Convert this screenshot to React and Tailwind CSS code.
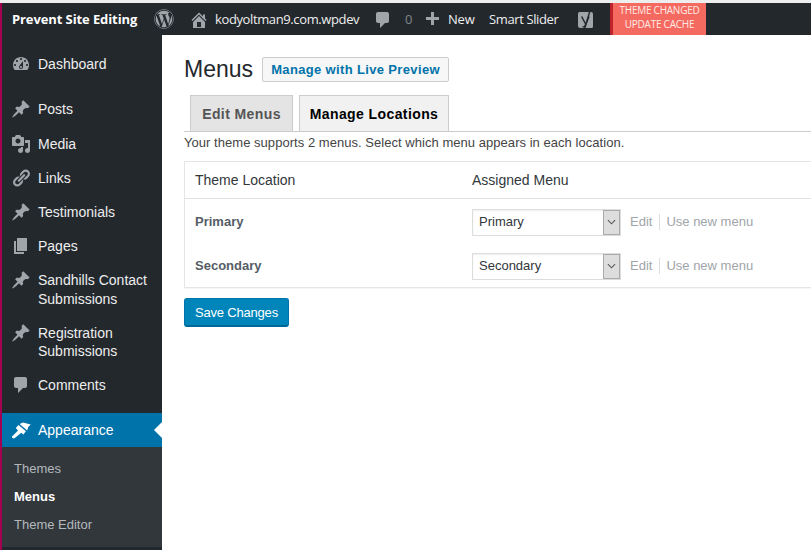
import React from "react";
import { FaWordpress } from "react-icons/fa";

const P = {
  dash: "M3.76 16h12.48c1.1-1.37 1.76-3.11 1.76-5 0-4.42-3.58-8-8-8s-8 3.58-8 8c0 1.89.66 3.63 1.76 5zM10 4c.55 0 1 .45 1 1s-.45 1-1 1-1-.45-1-1 .45-1 1-1zM6 6c.55 0 1 .45 1 1s-.45 1-1 1-1-.45-1-1 .45-1 1-1zm8 0c.55 0 1 .45 1 1s-.45 1-1 1-1-.45-1-1 .45-1 1-1zm-5.37 5.55L12 7v6c0 1.1-.9 2-2 2s-2-.9-2-2c0-.57.24-1.08.63-1.45zM4 10c.55 0 1 .45 1 1s-.45 1-1 1-1-.45-1-1 .45-1 1-1zm12 0c.55 0 1 .45 1 1s-.45 1-1 1-1-.45-1-1 .45-1 1-1zm-5 3c0-.55-.45-1-1-1s-1 .45-1 1 .45 1 1 1 1-.45 1-1z",
  pin: "M10.44 3.02l1.82-1.82 6.36 6.35-1.83 1.82c-1.05-.68-2.48-.57-3.41.36l-.75.75c-.92.93-1.04 2.35-.35 3.41l-1.83 1.82-2.41-2.41-2.8 2.79c-.42.42-3.38 2.71-3.8 2.29s1.86-3.39 2.28-3.81l2.79-2.79L4.1 9.36l1.83-1.82c1.05.69 2.48.57 3.41-.36l.75-.75c.93-.92 1.04-2.35.36-3.41z",
  media: "M13 11V4c0-.55-.45-1-1-1h-1.67L9 1H5L3.67 3H2c-.55 0-1 .45-1 1v7c0 .55.45 1 1 1h10c.55 0 1-.45 1-1zM7 4.5c1.38 0 2.5 1.12 2.5 2.5S8.38 9.5 7 9.5 4.5 8.38 4.5 7 5.62 4.5 7 4.5zM14 6h5v10.5c0 1.38-1.12 2.5-2.5 2.5S14 17.88 14 16.5s1.12-2.5 2.5-2.5c.17 0 .34.02.5.05V9h-3V6zm-4 8.05V13h2v3.5c0 1.38-1.12 2.5-2.5 2.5S7 17.88 7 16.5 8.12 14 9.5 14c.17 0 .34.02.5.05z",
  links: "M17.74 2.76c1.68 1.69 1.68 4.41 0 6.1l-1.53 1.52c-1.12 1.12-2.7 1.47-4.14 1.09l2.62-2.61.76-.77.76-.76c.84-.84.84-2.2 0-3.04-.84-.85-2.2-.85-3.04 0l-.77.76-3.38 3.38c-.37-1.44-.02-3.02 1.1-4.14l1.52-1.53c1.69-1.68 4.42-1.68 6.1 0zM8.59 13.43l5.34-5.34c.42-.42.42-1.1 0-1.52-.44-.43-1.13-.39-1.53 0l-5.33 5.34c-.42.42-.42 1.1 0 1.52.44.43 1.13.39 1.52 0zm-.76 2.29l4.14-4.15c.38 1.44.03 3.02-1.09 4.14l-1.52 1.53c-1.69 1.68-4.41 1.68-6.1 0-1.68-1.68-1.68-4.42 0-6.1l1.53-1.52c1.12-1.12 2.7-1.47 4.14-1.1l-4.14 4.15c-.85.84-.85 2.2 0 3.05.84.84 2.2.84 3.04 0z",
  page: "M6 15V2h10v13H6zm-1 1h8v2H3V5h2v11z",
  comment: "M5 2h9c1.1 0 2 .9 2 2v7c0 1.1-.9 2-2 2h-2l-5 5v-5H5c-1.1 0-2-.9-2-2V4c0-1.1.9-2 2-2z",
  home: "M16 8.5l1.53 1.53-1.06 1.06L10 4.62l-6.47 6.47-1.06-1.06L10 2.5l4 4v-2h2v4zm-6-2.46l6 5.99V18H4v-5.97zM12 17v-5H8v5h4z",
  plus: "M17 7v3h-5v5H9v-5H4V7h5V2h3v5h5z",
};

function Icon({ d, className }) {
  return (
    <svg viewBox="0 0 20 20" className={className} fill="currentColor" aria-hidden="true">
      <path d={d} fillRule="evenodd" />
    </svg>
  );
}

function Brush() {
  return (
    <svg viewBox="0 0 20 20" className="w-5 h-5 text-white" fill="currentColor" aria-hidden="true">
      <path d="M8.6 3.9 12 2.6 19.7 4.4 17.2 7 16.2 10.4Z" />
      <path d="M7.5 5 14.9 11.2 12.4 14.4 10.3 12.7 3.8 18C2.6 18.9.4 17.8 1 16.4L7 10.5 4.8 8Z" />
    </svg>
  );
}

function Yoast() {
  return (
    <svg viewBox="0 0 20 24" className="ml-[15px] mt-[1px] w-[20px] h-[24px]" aria-hidden="true">
      <path d="M3.5 4H15a2 2 0 0 1 2 2v12.5a1.5 1.5 0 0 1-1.5 1.5H4.5A2.5 2.5 0 0 1 2 17.5v-12A1.5 1.5 0 0 1 3.5 4Z" fill="#a0a5aa" />
      <path d="M14.5 1 8.4 21.5" stroke="#23282d" strokeWidth="1.4" fill="none" />
      <path d="M5.6 8.5 9.6 16M13 8.5l-3.4 8.2c-.7 1.6-1.6 2.3-3 2.3" stroke="#23282d" strokeWidth="1.5" fill="none" />
    </svg>
  );
}

function NavItem({ icon, lines, className = "", leading = "leading-[18.5px]" }) {
  return (
    <div className={`flex items-start pl-[9px] text-[#eeeeee] ${className}`}>
      <Icon d={icon} className="w-5 h-5 shrink-0 text-[#a0a5aa] mt-[-1px]" />
      <div className={`ml-[7px] ${leading}`}>
        {lines.map((l) => (
          <div key={l}>{l}</div>
        ))}
      </div>
    </div>
  );
}

function Sidebar() {
  return (
    <aside className="w-[162px] shrink-0 bg-[#23282d] border-l-2 border-[#a3004f] text-[14px] font-['Liberation_Sans',sans-serif] flex flex-col">
      <NavItem icon={P.dash} lines={["Dashboard"]} className="mt-[20px]" />
      <NavItem icon={P.pin} lines={["Posts"]} className="mt-[26px]" />
      <NavItem icon={P.media} lines={["Media"]} className="mt-[16px]" />
      <NavItem icon={P.links} lines={["Links"]} className="mt-[15px]" />
      <NavItem icon={P.pin} lines={["Testimonials"]} className="mt-[15px]" />
      <NavItem icon={P.page} lines={["Pages"]} className="mt-[15px]" />
      <NavItem icon={P.pin} lines={["Sandhills Contact", "Submissions"]} className="mt-[15px]" />
      <NavItem icon={P.pin} lines={["Registration", "Submissions"]} className="mt-[16px]" leading="leading-[18px]" />
      <NavItem icon={P.comment} lines={["Comments"]} className="mt-[16px]" />
      <div className="relative mt-[18px] h-[34px] bg-[#0073aa] flex items-center pl-[9px] text-white">
        <Brush />
        <span className="ml-[7px]">Appearance</span>
        <span className="absolute right-0 top-[9px] border-y-[8px] border-r-[8px] border-y-transparent border-r-white" />
      </div>
      <div className="bg-[#32373c] h-[100px] pl-[12px] pt-[13px] text-[13px] flex flex-col gap-[10px] leading-[18px]">
        <div className="text-[#b4b9be]">Themes</div>
        <div className="text-white font-bold">Menus</div>
        <div className="text-[#b4b9be]">Theme Editor</div>
      </div>
      <div className="flex-1" />
    </aside>
  );
}

function AdminBar() {
  return (
    <header className="h-8 bg-[#23282d] flex items-center text-[13px] text-[#eeeeee] font-['Open_Sans',sans-serif] border-l-2 border-[#a3004f] whitespace-nowrap">
      <span className="ml-[10px] mt-[2px] font-bold text-white w-[131px] tracking-[-0.1px]">Prevent Site Editing</span>
      <FaWordpress className="ml-[11px] w-5 h-5 text-[#a0a5aa]" />
      <Icon d={P.home} className="ml-[15px] mt-[1px] w-5 h-5 text-[#a0a5aa]" />
      <span className="ml-[6px] mt-[2px] tracking-[-0.38px] w-[146px]">kodyoltman9.com.wpdev</span>
      <Icon d={P.comment} className="ml-[12px] mt-[1px] w-5 h-5 text-[#a0a5aa]" />
      <span className="ml-[12px] mt-[2px] text-[#82878c] w-[8px]">0</span>
      <Icon d={P.plus} className="ml-[9px] mt-[1px] w-5 h-5 text-[#a0a5aa]" />
      <span className="ml-[6px] mt-[2px] tracking-[-0.2px] w-[27px]">New</span>
      <span className="ml-[14px] mt-[2px] tracking-[-0.38px] w-[72px]">Smart Slider</span>
      <Yoast />
      <div className="ml-[14px] h-8 w-[96px] bg-[#f56a60] border-l-[3px] border-[#c0222c] text-[10px] leading-[14px] text-center text-[#fdeae6] tracking-[-0.25px] flex flex-col">
        <div>THEME CHANGED</div>
        <div>UPDATE CACHE</div>
      </div>
    </header>
  );
}

function Row({ name, value }) {
  return (
    <div className="flex items-center h-[44px]">
      <div className="w-[287px] pl-[10px] font-bold text-[#555d66] text-[13px]">{name}</div>
      <div className="w-[149px] h-[27px] border border-[#dddddd] bg-white flex items-center pl-[6px] text-[13px] text-[#32373c] relative shadow-[inset_0_1px_2px_rgba(0,0,0,0.07)]">
        {value}
        <span className="absolute right-0 top-0 bottom-0 w-[17px] bg-[#dddddd] border border-[#aaaaaa] flex items-center justify-center">
          <svg viewBox="0 0 10 6" className="w-[9px] h-[6px]" fill="none" stroke="#555555" strokeWidth="1.2"><path d="M1 1l4 4 4-4" /></svg>
        </span>
      </div>
      <span className="ml-[9px] text-[#a0a5aa] text-[13px]">Edit</span>
      <span className="ml-[7px] w-px h-[16px] bg-[#dddddd]" />
      <span className="ml-[6px] text-[#a0a5aa] text-[13px]">Use new menu</span>
    </div>
  );
}

export default function App() {
  return (
    <div className="w-[811px] h-[550px] overflow-hidden flex flex-col bg-white font-['Liberation_Sans',sans-serif]">
      <div className="h-[3px] bg-[#eeeeee] shrink-0" />
      <AdminBar />
      <div className="flex flex-1 min-h-0">
        <Sidebar />
        <main className="flex-1 min-w-0 pl-[22px] text-[#444444] text-[13px]">
          <div className="flex items-center mt-[21px] h-[26px]">
            <h1 className="text-[23px] text-[#23282d] leading-[26px] font-normal">Menus</h1>
            <span className="ml-[9px] h-[25px] w-[187px] flex items-center justify-center border border-[#cccccc] bg-[#f7f7f7] rounded-[2px] text-[#0073aa] font-semibold text-[13px] tracking-[0.35px] pt-[1px]">Manage with Live Preview</span>
          </div>
          <div className="flex mt-[14px] pl-[6px] border-b border-[#cccccc] h-[36px] items-end">
            <span className="h-[36px] w-[103px] flex items-center justify-center border border-[#cccccc] border-b-0 bg-[#e4e4e4] font-bold text-[14px] text-[#555555] tracking-[0.4px] pt-[1px]">Edit Menus</span>
            <span className="ml-[6px] h-[36px] w-[150px] flex items-center justify-center border border-[#cccccc] border-b-0 bg-[#f1f1f1] font-bold text-[14px] text-black tracking-[0.4px] pt-[1px]">Manage Locations</span>
          </div>
          <p className="mt-[2px] leading-[18px] tracking-[0.04px]">Your theme supports 2 menus. Select which menu appears in each location.</p>
          <div className="mt-[9px] border border-[#e5e5e5] border-r-0 shadow-[0_1px_1px_rgba(0,0,0,0.04)]">
            <div className="flex items-center h-[37px] border-b border-[#e1e1e1] text-[14px] text-[#32373c]">
              <div className="w-[287px] pl-[10px]">Theme Location</div>
              <div>Assigned Menu</div>
            </div>
            <div className="pt-[1px] -mb-[1px]">
              <Row name="Primary" value="Primary" />
              <Row name="Secondary" value="Secondary" />
            </div>
          </div>
          <button className="mt-[10px] w-[105px] h-[29px] pt-[1px] rounded-[3px] bg-[#0085ba] border border-[#0073aa] border-b-2 border-b-[#006799] text-white text-[13px] tracking-[-0.2px]">Save Changes</button>
        </main>
      </div>
    </div>
  );
}
